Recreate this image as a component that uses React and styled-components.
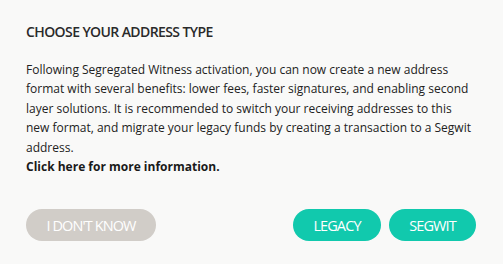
import React from 'react';
import styled, { createGlobalStyle } from 'styled-components';

const Global = createGlobalStyle`
  html, body {
    margin: 0;
    padding: 0;
    background: #f9f9f8;
  }
  body {
    font-family: "Open Sans", "Noto Sans", sans-serif;
  }
`;

const Modal = styled.div`
  box-sizing: border-box;
  width: 503px;
  height: 264px;
  padding: 22px 27px 0 26px;
  background: #f9f9f8;
  color: #222;
`;

const Title = styled.h3`
  margin: 0 0 18px 0;
  font-size: 14px;
  font-weight: 600;
  letter-spacing: -0.6px;
  line-height: 20px;
  color: #2a2a2a;
`;

const Body = styled.p`
  margin: 0;
  max-width: 446px;
  font-size: 12px;
  line-height: 19.4px;
  color: #222;
`;

const More = styled.a`
  display: block;
  font-weight: 700;
  color: #1a1a1a;
  text-decoration: none;
  cursor: pointer;
`;

const Actions = styled.div`
  display: flex;
  align-items: center;
  gap: 8px;
  margin-top: 33px;
`;

const Spacer = styled.div`
  flex: 1;
`;

const Button = styled.button`
  height: 32px;
  padding: 0;
  border: none;
  border-radius: 16px;
  background: ${p => (p.$muted ? '#d1cdc8' : '#11c9ad')};
  color: #fff;
  font-family: inherit;
  font-size: 14.5px;
  font-weight: 400;
  letter-spacing: -0.9px;
  text-transform: uppercase;
  cursor: pointer;
  width: ${p => p.$w};
`;

export default function App() {
  return (
    <>
      <Global />
      <Modal>
        <Title>CHOOSE YOUR ADDRESS TYPE</Title>
        <Body>
          Following Segregated Witness activation, you can now create a new address
          format with several benefits: lower fees, faster signatures, and enabling second
          layer solutions. It is recommended to switch your receiving addresses to this
          new format, and migrate your legacy funds by creating a transaction to a Segwit
          address.
          <More>Click here for more information.</More>
        </Body>
        <Actions>
          <Button $muted $w="130px">I don't know</Button>
          <Spacer />
          <Button $w="88px">Legacy</Button>
          <Button $w="87px">Segwit</Button>
        </Actions>
      </Modal>
    </>
  );
}
